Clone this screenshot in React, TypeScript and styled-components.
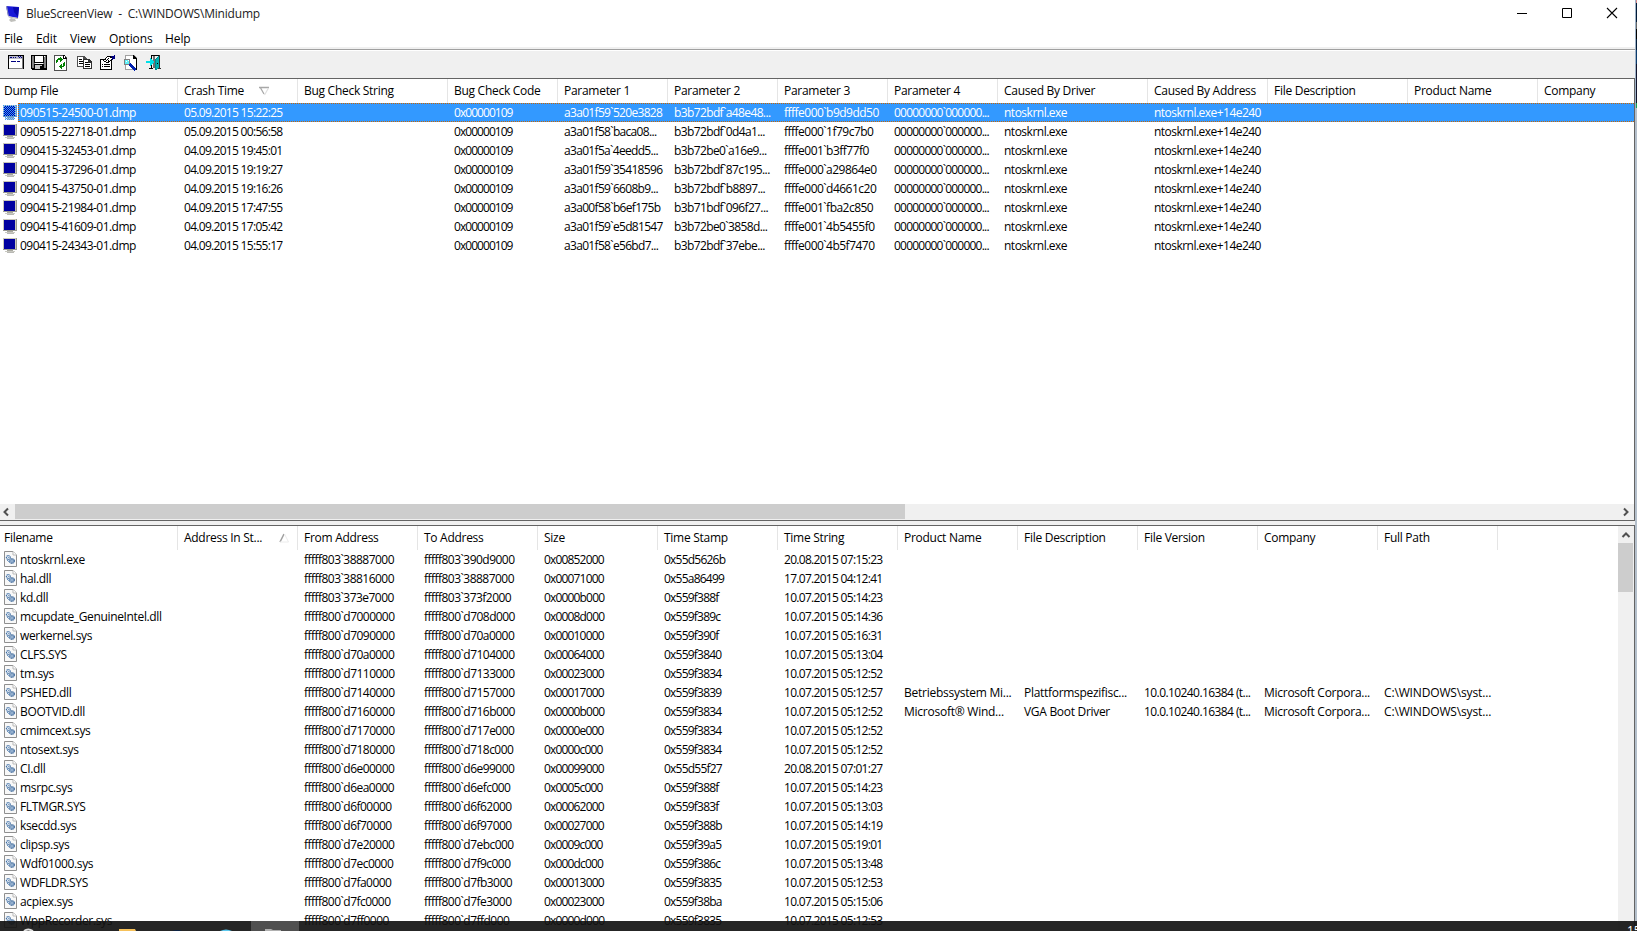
import React from "react";
import styled, { createGlobalStyle } from "styled-components";

const Global = createGlobalStyle`
  * { box-sizing: border-box; }
  body { margin: 0; overflow: hidden; background: #fff; }
  svg { display: block; }
`;

const Screen = styled.div`
  position: relative;
  width: 1637px;
  height: 931px;
  overflow: hidden;
  display: flex;
  background: #b4bfcb;
  font: 12px/19px "Open Sans", "Noto Sans", sans-serif;
  color: #000;
`;
const Win = styled.div`
  width: 1635px;
  height: 931px;
  display: flex;
  flex-direction: column;
  background: #fff;
  flex: none;
`;
const Edge = styled.div`
  width: 2px;
  height: 108px;
  background: linear-gradient(#d98a8a 0 3px, #001a38 3px 22px, #666 22px 29px, #000 29px 39px, #001a38 39px 50px, #0b3b6c 50px 64px, #10132c 64px 103px, #18a050 103px);
  border-left: 1px solid #9fb2c6;
`;
const TitleBar = styled.div`
  height: 28px;
  flex: none;
  display: flex;
  align-items: center;
  padding-left: 5px;
  color: #222;
`;
const Title = styled.div`
  flex: 1;
  padding: 0 0 2px 5px;
  white-space: pre;
  letter-spacing: -0.2px;
`;
const Controls = styled.div`
  display: flex;
  gap: 29px;
  padding: 0 15px 2px 0;
`;
const MenuBar = styled.div`
  height: 19px;
  flex: none;
  display: flex;
  line-height: 22px;
  padding-left: 4px;
`;
const MenuItem = styled.div<{ $w: number }>`
  width: ${(p) => p.$w}px;
  letter-spacing: -0.1px;
`;
const ToolBar = styled.div`
  height: 31px;
  flex: none;
  border-top: 2px solid #f0f0f0;
  background: linear-gradient(#a0a0a0 0 1px, #fff 1px 2px, #f0f0f0 2px);
  display: flex;
  padding: 6px 0 0 8px;
  gap: 7px;
`;
const Pane = styled.div<{ $h: number }>`
  height: ${(p) => p.$h}px;
  flex: none;
  border: 1px solid #646464;
  border-left: 0;
  display: flex;
  flex-direction: column;
  overflow: hidden;
  background: #fff;
`;
const Splitter = styled.div`
  height: 4px;
  flex: none;
  background: #f0f0f0;
`;
const Split = styled.div`
  display: flex;
  flex: 1;
  min-height: 0;
`;
const List = styled.div`
  flex: 1;
  min-width: 0;
  overflow: hidden;
`;
const Header = styled.div`
  display: flex;
  height: 24px;
`;
const HeadCell = styled.div<{ $w: number; $first?: boolean }>`
  width: ${(p) => p.$w}px;
  flex: none;
  padding-left: ${(p) => (p.$first ? 4 : 6)}px;
  border-right: 1px solid #e5e5e5;
  display: flex;
  line-height: 24px;
  white-space: nowrap;
  letter-spacing: -0.28px;
  svg { margin: 7px 0 0 auto; }
`;
const Row = styled.div<{ $sel?: boolean }>`
  display: flex;
  height: 19px;
  color: ${(p) => (p.$sel ? "#fff" : "#000")};
`;
const FileCell = styled.div`
  width: 18px;
  flex: none;
  padding-left: 3px;
`;
const Cells = styled.div<{ $sel?: boolean }>`
  display: flex;
  flex: 1;
  position: relative;
  background: ${(p) => (p.$sel ? "#3399ff" : "transparent")};
  ${(p) =>
    p.$sel &&
    `&::after { content: ""; position: absolute; inset: 0; border: 1px dotted #cc6600; border-right: 0; }`}
`;
const Cell = styled.div<{ $w: number; $ls: number; $first?: boolean }>`
  width: ${(p) => p.$w}px;
  flex: none;
  padding-left: ${(p) => (p.$first ? 2 : 6)}px;
  white-space: nowrap;
  letter-spacing: ${(p) => p.$ls}px;
`;
const HScroll = styled.div`
  height: 16px;
  background: #f0f0f0;
  display: flex;
  justify-content: space-between;
  margin-top: auto;
`;
const HThumb = styled.div`
  width: 890px;
  height: 15px;
  background: #cdcdcd;
  margin: 0 auto 0 0;
`;
const ScrollButton = styled.div<{ $w: number; $h: number; $pr?: number }>`
  width: ${(p) => p.$w}px;
  height: ${(p) => p.$h}px;
  padding-right: ${(p) => p.$pr ?? 0}px;
  display: flex;
  align-items: center;
  justify-content: center;
`;
const VScroll = styled.div`
  width: 16px;
  background: #f0f0f0;
  padding-right: 1px;
`;
const VThumb = styled.div`
  height: 49px;
  background: #cdcdcd;
`;
const TaskBar = styled.div`
  position: absolute;
  left: 0;
  right: 0;
  bottom: 0;
  height: 10px;
  background: rgba(18, 18, 18, 0.92);
  overflow: hidden;
  display: flex;
`;
const Clock = styled.div`
  margin-left: auto;
  height: 10px;
  width: 10px;
  padding-top: 3px;
  line-height: 14px;
  color: #fff;
  overflow: hidden;
`;

const AppIcon = () => (
  <svg width="16" height="18" viewBox="0 0 16 18">
    <path d="M1 1L14 2L13 13L3 11Z" fill="#1818d8" />
    <path d="M1 1L3 11L4 11.500L2 1Z" fill="#9aa0b8" />
    <path d="M8 2L14 2.500L13 12L9 7Z" fill="#0808b0" />
    <path d="M3 11.500L13 13V14L4 12.500Z" fill="#b8b8b0" />
    <path d="M6 13L10 14L11 16L6 17L4 15Z" fill="#c0c0bc" />
  </svg>
);

const DumpIcon = ({ sel }: { sel?: boolean }) => (
  <svg width="14" height="17" viewBox="0 0 14 17" shapeRendering="crispEdges">
    <defs>
      <pattern id="dither" width="2" height="2" patternUnits="userSpaceOnUse">
        <rect width="1" height="1" fill="#3399ff" />
        <rect x="1" y="1" width="1" height="1" fill="#3399ff" />
      </pattern>
    </defs>
    <rect y="2" width="14" height="12" fill="#c9c7ba" />
    <path d="M13 2h1v12H0v-1h13z" fill="#9a9a92" />
    <rect x="1" y="3" width="11" height="10" fill="#0000a0" />
    <rect x="4" y="14" width="6" height="1" fill="#a8a8a0" />
    <rect x="2" y="15" width="10" height="1" fill="#c8c8c0" />
    <rect x="4" y="16" width="7" height="1" fill="#b8b8b4" />
    {sel && <path d="M0 2h14v12h-2v3H2v-3H0z" fill="url(#dither)" />}
  </svg>
);

const DllIcon = () => (
  <svg width="14" height="18" viewBox="0 0 14 18">
    <path d="M1.500 1.500H10L13.500 5V16.500H1.500Z" fill="#f8f8f8" stroke="#8f8f8f" />
    <path d="M10 1.500V5H13.500" fill="#fff" stroke="#b8b8b8" />
    <circle cx="5.300" cy="7.500" r="1.900" fill="#fff" stroke="#3f6fa5" strokeWidth="1.200" strokeDasharray="1.200 .4" />
    <circle cx="9" cy="11" r="2.200" fill="#d4e4f4" stroke="#22528a" strokeWidth="1.300" strokeDasharray="1.200 .4" />
    <path d="M4 10l3 2.500" stroke="#4a7ab0" strokeWidth=".9" />
    <circle cx="5.300" cy="7.500" r=".5" fill="#3f6fa5" />
    <circle cx="9" cy="11" r=".7" fill="#22528a" />
  </svg>
);

const ToolSvg = ({ children }: { children: React.ReactNode }) => (
  <svg width="16" height="16" viewBox="0 0 16 16" shapeRendering="crispEdges">{children}</svg>
);

const Tools = () => (
  <>
    <ToolSvg>
      <path d="M0 0h16v14H0z" fill="#000" />
      <path d="M1 1h14v12H1z" fill="#fff" />
      <path d="M1 1h14v3H1z" fill="#b8b8c8" />
      <path d="M2 2h2v1H2zM5 2h1v1H5zM7 2h1v1H7zM10 1h1v1h-1zM12 1h1v1h-1zM11 2h1v1h-1zM13 2h1v1h-1z" fill="#000080" />
      <path d="M3 6h5v1H3zM9 6h3v1H9z" fill="#000080" />
      <path d="M15 1v13H1v-1h13V1z" fill="#808080" />
    </ToolSvg>
    <ToolSvg>
      <path d="M0 0h16v15H1l-1-1z" fill="#000" />
      <path d="M1 1h2v12H1zM3 8h10v1H3zM13 1h2v12h-2z" fill="#808080" />
      <path d="M4 1h8v6H4z" fill="#fff" />
      <path d="M4 10h7v4H4z" fill="#c8c8c8" />
      <path d="M9 11h2v3H9z" fill="#000" />
      <path d="M4 8h8v1H4z" fill="#fff" />
      <path d="M13 1h1v1h-1z" fill="#fff" />
    </ToolSvg>
    <ToolSvg>
      <path d="M0 0h10l3 3v13H0z" fill="#505050" />
      <path d="M1 1h8v3h3v11H1z" fill="#fff" />
      <path d="M9 0v4h4V3h-1V2h-1V0z" fill="#000" />
      <path d="M10 1h1v2h-1z" fill="#fff" />
      <path d="M4 3h2V2h1v1h1v1h1v1H8v1H7v1H6V5H4v2H3v1H2V5h1V4h1zM10 7h1v4h-1v1H8v2H7v-1H6v-1H5v-1h1v-1h1V9h1v2h1V8h1z" fill="#008000" />
    </ToolSvg>
    <ToolSvg>
      <path d="M0 1h7l3 3v8H0z" fill="#505050" />
      <path d="M1 2h5v3h3v6H1z" fill="#fff" />
      <path d="M2 4h3v1H2zM2 6h4v1H2zM2 8h4v1H2z" fill="#000" />
      <path d="M6 4h6l3 3v7H6z" fill="#303030" />
      <path d="M7 5h4v3h3v5H7z" fill="#fff" />
      <path d="M8 7h3v1H8zM8 9h5v1H8zM8 11h5v1H8z" fill="#000" />
    </ToolSvg>
    <ToolSvg>
      <path d="M0 4h12v11H0z" fill="#000" />
      <path d="M1 5h10v9H1z" fill="#fff" />
      <path d="M2 9h1v1H2zM4 9h6v1H4zM2 11h1v1H2zM4 11h6v1H4z" fill="#000" />
      <path d="M3 5h1V4h1V3h1V2h1V1h4v1h2v3h-2v1h-1v1H9v1H6V7H4V6H3z" fill="#000" />
      <path d="M4 5h1V4h1V3h1V2h3v1h2v1h-1v1h-1v1H8v1H6V6H4z" fill="#fff" />
      <path d="M5 4h1v1H5zM7 4h1v1H7zM6 5h1v1H6zM8 5h1v1H8zM8 3h1v1H8z" fill="#000" />
      <path d="M11 1h3V0h1v4h-2v1h-1V2h-1z" fill="#000080" />
    </ToolSvg>
    <ToolSvg>
      <path d="M2 0h9l3 3v12H2z" fill="#a0a0a0" />
      <path d="M3 1h7v3h3v10H3z" fill="#fff" />
      <path d="M10 0v4h3v10h-2v1h3V3h-1V2h-1V1h-1V0z" fill="#000" />
      <circle cx="4" cy="7" r="3.500" fill="#808080" />
      <circle cx="4" cy="7" r="2.500" fill="#60f0f8" />
      <path d="M6.500 9l6 6" stroke="#0020b0" strokeWidth="2.500" />
      <path d="M3 6h1v1H3zM5 5h1v1H5z" fill="#fff" />
    </ToolSvg>
    <ToolSvg>
      <path d="M5 0h9v1H6v3H5zM5 10h1v3H5zM3 13h4v1H3z" fill="#000" />
      <path d="M7 1h2v12H7z" fill="#707070" />
      <path d="M13 0h1v14h-1zM12 13h3v1h-3z" fill="#303030" />
      <path d="M9 4l4-3v12l-3 2H9z" fill="#008890" />
      <path d="M10 4l3-2v11l-3 1z" fill="#00b0b0" />
      <path d="M0 6h4V3h1v1h1v1h1v1h1v2H7v1H6v1H5v1H4V8H0z" fill="#00e0e8" />
      <path d="M11 8h1v1h-1z" fill="#000" />
    </ToolSvg>
  </>
);

const Chevron = ({ dir }: { dir: "l" | "r" | "u" }) => {
  const d = { l: "M7 1.500L3.500 5L7 8.500", r: "M3 1.500L6.500 5L3 8.500", u: "M1.500 7L5 3.500L8.500 7" }[dir];
  return (
    <svg width="10" height="10" viewBox="0 0 10 10">
      <path d={d} fill="none" stroke="#505050" strokeWidth="2" />
    </svg>
  );
};

const SortDown = () => (
  <svg width="38" height="10" viewBox="0 0 38 10">
    <path d="M0 1.500h10M1 1l4 7" stroke="#a8a8a8" strokeWidth="1.300" fill="none" />
    <path d="M9.500 2L5.500 9" stroke="#e0e0e0" strokeWidth="1.200" />
  </svg>
);
const SortUp = () => (
  <svg width="18" height="11" viewBox="0 0 18 11">
    <path d="M1 9l4-8" stroke="#a0a0a0" strokeWidth="1.500" />
    <path d="M5.500 1l4 8H1" stroke="#ececec" fill="none" />
  </svg>
);

const dumpCols: [string, number][] = [
  ["Dump File", 178], ["Crash Time", 120], ["Bug Check String", 150], ["Bug Check Code", 110],
  ["Parameter 1", 110], ["Parameter 2", 110], ["Parameter 3", 110], ["Parameter 4", 110],
  ["Caused By Driver", 150], ["Caused By Address", 120], ["File Description", 140],
  ["Product Name", 130], ["Company", 140],
];
const dumps = `090515-24500-01.dmp|05.09.2015 15:22:25|a3a01f59\`520e3828|b3b72bdf\`a48e48...|ffffe000\`b9d9dd50
090515-22718-01.dmp|05.09.2015 00:56:58|a3a01f58\`baca08...|b3b72bdf\`0d4a1...|ffffe000\`1f79c7b0
090415-32453-01.dmp|04.09.2015 19:45:01|a3a01f5a\`4eedd5...|b3b72be0\`a16e9...|ffffe001\`b3ff77f0
090415-37296-01.dmp|04.09.2015 19:19:27|a3a01f59\`35418596|b3b72bdf\`87c195...|ffffe000\`a29864e0
090415-43750-01.dmp|04.09.2015 19:16:26|a3a01f59\`6608b9...|b3b72bdf\`b8897...|ffffe000\`d4661c20
090415-21984-01.dmp|04.09.2015 17:47:55|a3a00f58\`b6ef175b|b3b71bdf\`096f27...|ffffe001\`fba2c850
090415-41609-01.dmp|04.09.2015 17:05:42|a3a01f59\`e5d81547|b3b72be0\`3858d...|ffffe001\`4b5455f0
090415-24343-01.dmp|04.09.2015 15:55:17|a3a01f58\`e56bd7...|b3b72bdf\`37ebe...|ffffe000\`4b5f7470`
  .split("\n")
  .map((line) => {
    const [file, time, p1, p2, p3] = line.split("|");
    return [file, time, "", "0x00000109", p1, p2, p3, "00000000`000000...", "ntoskrnl.exe", "ntoskrnl.exe+14e240"];
  });
const dumpSpacing = [-0.53, -0.7, 0, -0.95, -0.68, -0.62, -0.52, -0.78, -0.5, -0.53];

const driverCols: [string, number][] = [
  ["Filename", 178], ["Address In St...", 120], ["From Address", 120], ["To Address", 120], ["Size", 120],
  ["Time Stamp", 120], ["Time String", 120], ["Product Name", 120], ["File Description", 120],
  ["File Version", 120], ["Company", 120], ["Full Path", 120],
];
const drivers = `ntoskrnl.exe|fffff803\`38887000|fffff803\`390d9000|0x00852000|0x55d5626b|20.08.2015 07:15:23
hal.dll|fffff803\`38816000|fffff803\`38887000|0x00071000|0x55a86499|17.07.2015 04:12:41
kd.dll|fffff803\`373e7000|fffff803\`373f2000|0x0000b000|0x559f388f|10.07.2015 05:14:23
mcupdate_GenuineIntel.dll|fffff800\`d7000000|fffff800\`d708d000|0x0008d000|0x559f389c|10.07.2015 05:14:36
werkernel.sys|fffff800\`d7090000|fffff800\`d70a0000|0x00010000|0x559f390f|10.07.2015 05:16:31
CLFS.SYS|fffff800\`d70a0000|fffff800\`d7104000|0x00064000|0x559f3840|10.07.2015 05:13:04
tm.sys|fffff800\`d7110000|fffff800\`d7133000|0x00023000|0x559f3834|10.07.2015 05:12:52
PSHED.dll|fffff800\`d7140000|fffff800\`d7157000|0x00017000|0x559f3839|10.07.2015 05:12:57|Betriebssystem Mi...|Plattformspezifisc...|10.0.10240.16384 (t...|Microsoft Corpora...|C:\\WINDOWS\\syst...
BOOTVID.dll|fffff800\`d7160000|fffff800\`d716b000|0x0000b000|0x559f3834|10.07.2015 05:12:52|Microsoft® Wind...|VGA Boot Driver|10.0.10240.16384 (t...|Microsoft Corpora...|C:\\WINDOWS\\syst...
cmimcext.sys|fffff800\`d7170000|fffff800\`d717e000|0x0000e000|0x559f3834|10.07.2015 05:12:52
ntosext.sys|fffff800\`d7180000|fffff800\`d718c000|0x0000c000|0x559f3834|10.07.2015 05:12:52
CI.dll|fffff800\`d6e00000|fffff800\`d6e99000|0x00099000|0x55d55f27|20.08.2015 07:01:27
msrpc.sys|fffff800\`d6ea0000|fffff800\`d6efc000|0x0005c000|0x559f388f|10.07.2015 05:14:23
FLTMGR.SYS|fffff800\`d6f00000|fffff800\`d6f62000|0x00062000|0x559f383f|10.07.2015 05:13:03
ksecdd.sys|fffff800\`d6f70000|fffff800\`d6f97000|0x00027000|0x559f388b|10.07.2015 05:14:19
clipsp.sys|fffff800\`d7e20000|fffff800\`d7ebc000|0x0009c000|0x559f39a5|10.07.2015 05:19:01
Wdf01000.sys|fffff800\`d7ec0000|fffff800\`d7f9c000|0x000dc000|0x559f386c|10.07.2015 05:13:48
WDFLDR.SYS|fffff800\`d7fa0000|fffff800\`d7fb3000|0x00013000|0x559f3835|10.07.2015 05:12:53
acpiex.sys|fffff800\`d7fc0000|fffff800\`d7fe3000|0x00023000|0x559f38ba|10.07.2015 05:15:06
WppRecorder.sys|fffff800\`d7ff0000|fffff800\`d7ffd000|0x0000d000|0x559f3835|10.07.2015 05:12:53`
  .split("\n")
  .map((line) => {
    const [file, ...rest] = line.split("|");
    return [file, "", ...rest];
  });
const driverSpacing = [-0.35, 0, -0.53, -0.53, -0.83, -0.78, -0.7, -0.25, -0.3, -0.58, -0.27, -0.15];

type GridProps = {
  cols: [string, number][];
  rows: string[][];
  spacing: number[];
  icon: (sel: boolean) => React.ReactNode;
  sort: React.ReactNode;
  selected?: number;
};
const Grid = ({ cols, rows, spacing, icon, sort, selected = -1 }: GridProps) => (
  <List>
    <Header>
      {cols.map(([name, w], i) => (
        <HeadCell key={i} $w={w} $first={i === 0}>
          {name}
          {i === 1 && sort}
        </HeadCell>
      ))}
    </Header>
    {rows.map((r, ri) => (
      <Row key={ri} $sel={ri === selected}>
        <FileCell>{icon(ri === selected)}</FileCell>
        <Cells $sel={ri === selected}>
          {r.map((text, i) => (
            <Cell key={i} $w={i === 0 ? 160 : cols[i][1]} $ls={spacing[i]} $first={i === 0}>
              {text}
            </Cell>
          ))}
        </Cells>
      </Row>
    ))}
  </List>
);

export default function App() {
  return (
    <Screen>
      <Global />
      <Win>
        <TitleBar>
          <AppIcon />
          <Title>BlueScreenView  -  C:\WINDOWS\Minidump</Title>
          <Controls>
            <svg width="16" height="16" viewBox="0 0 16 16"><path d="M3 8.500h10" stroke="#000" /></svg>
            <svg width="16" height="16" viewBox="0 0 16 16"><path d="M3.500 3.500h9v9h-9z" fill="none" stroke="#000" /></svg>
            <svg width="16" height="16" viewBox="0 0 16 16"><path d="M3 3l10 10M13 3L3 13" stroke="#000" strokeWidth="1.100" /></svg>
          </Controls>
        </TitleBar>
        <MenuBar>
          <MenuItem $w={32}>File</MenuItem>
          <MenuItem $w={34}>Edit</MenuItem>
          <MenuItem $w={39}>View</MenuItem>
          <MenuItem $w={56}>Options</MenuItem>
          <MenuItem $w={40}>Help</MenuItem>
        </MenuBar>
        <ToolBar>
          <Tools />
        </ToolBar>
        <Pane $h={443}>
          <Grid
            cols={dumpCols}
            rows={dumps}
            spacing={dumpSpacing}
            icon={(sel) => <DumpIcon sel={sel} />}
            sort={<SortDown />}
            selected={0}
          />
          <HScroll>
            <ScrollButton $w={15} $h={15} $pr={3}><Chevron dir="l" /></ScrollButton>
            <HThumb />
            <ScrollButton $w={17} $h={15}><Chevron dir="r" /></ScrollButton>
          </HScroll>
        </Pane>
        <Splitter />
        <Pane $h={420}>
          <Split>
            <Grid
              cols={driverCols}
              rows={drivers}
              spacing={driverSpacing}
              icon={() => <DllIcon />}
              sort={<SortUp />}
            />
            <VScroll>
              <ScrollButton $w={15} $h={17}><Chevron dir="u" /></ScrollButton>
              <VThumb />
            </VScroll>
          </Split>
        </Pane>
      </Win>
      <Edge />
      <TaskBar>
        <svg width="300" height="10" viewBox="0 0 300 10">
          <rect x="251" width="48" height="10" fill="#505050" />
          <path d="M24 10q4-3 9 0" fill="none" stroke="#ddd" strokeWidth="2" />
          <path d="M119 8h16l1 2h-17z" fill="#f6c15a" />
          <path d="M172 10q6-2 10 0z" fill="#0a2347" />
          <path d="M220 10q6-3 12 0z" fill="#5cc8ee" />
          <path d="M265 8h6l2 1h8v1h-16z" fill="#b0b0b0" />
        </svg>
        <Clock>15</Clock>
      </TaskBar>
    </Screen>
  );
}
